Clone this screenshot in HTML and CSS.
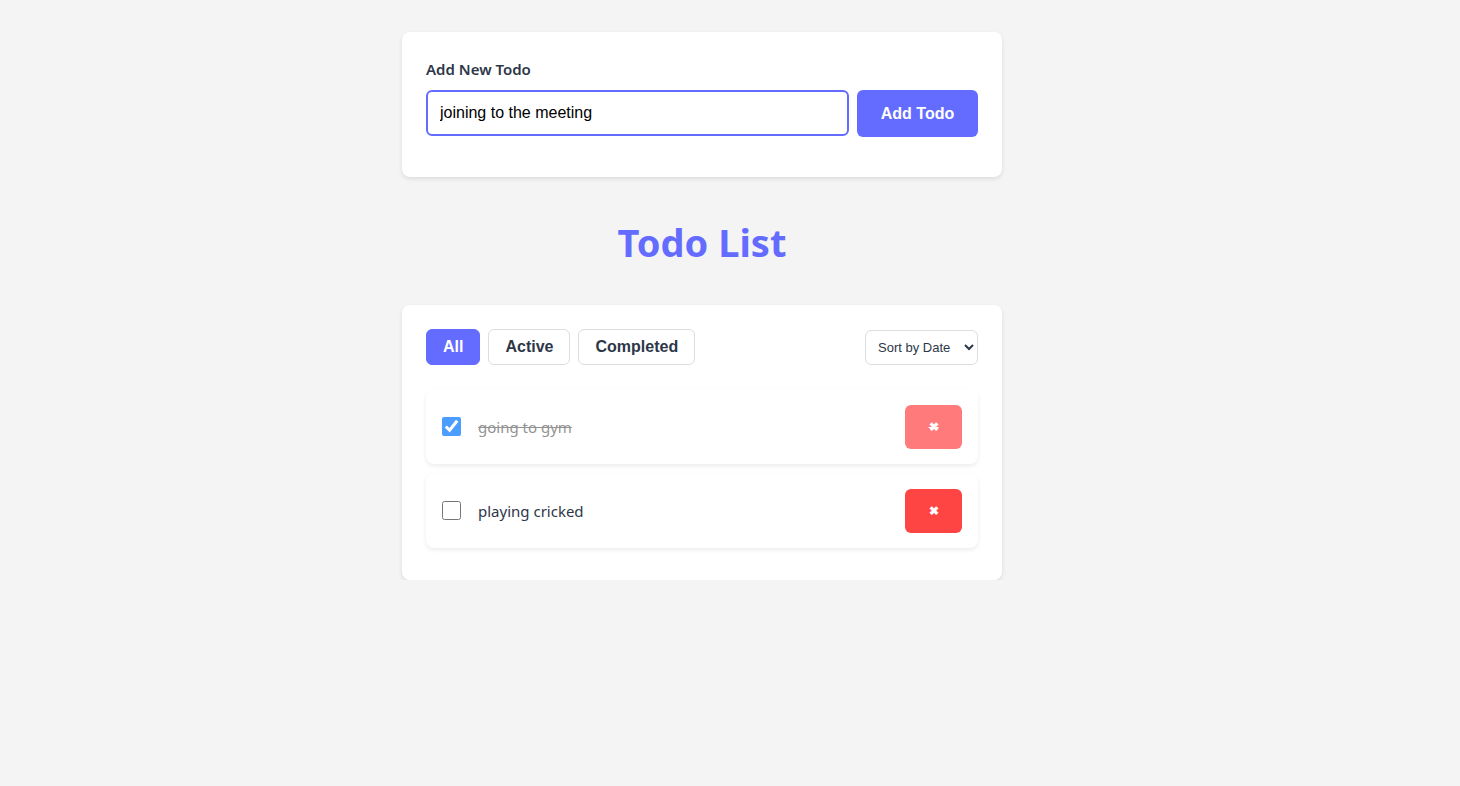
FILE: index.html
```html
<!DOCTYPE html>
<html>
<head>
<meta charset="utf-8">
<link rel="stylesheet" href="styles.css">
</head>
<body>
<div class="app">
  <form class="card add-card">
    <label class="add-label">Add New Todo</label>
    <div class="add-row">
      <input class="add-input" type="text" value="joining to the meeting">
      <button class="add-btn" type="button">Add Todo</button>
    </div>
  </form>
  <h1 class="title">Todo List</h1>
  <div class="card list-card">
    <div class="toolbar">
      <div class="filters">
        <button class="filter active-filter">All</button>
        <button class="filter">Active</button>
        <button class="filter">Completed</button>
      </div>
      <select class="sort"><option>Sort by Date</option></select>
    </div>
    <ul class="todos">
      <li class="todo done">
        <input class="check" type="checkbox" checked>
        <span class="todo-text">going to gym</span>
        <button class="del">✖</button>
      </li>
      <li class="todo">
        <input class="check" type="checkbox">
        <span class="todo-text">playing cricked</span>
        <button class="del">✖</button>
      </li>
    </ul>
  </div>
</div>
</body>
</html>
```

FILE: styles.css
```css
* { box-sizing: border-box; }
body {
  margin: 0;
  background: #f4f4f4;
  font-family: "Noto Sans", sans-serif;
}
.app {
  width: 600px;
  margin: 32px 0 0 402px;
}
.card {
  background: #fff;
  border-radius: 8px;
  box-shadow: 0 2px 4px rgba(0,0,0,0.1);
  padding: 24px;
}
.add-card { padding: 27px 24px 40px; margin: 0; }
.add-label {
  display: block;
  font-size: 15px;
  font-weight: 600;
  color: #2d3748;
  margin-bottom: 11px;
}
.add-row { display: flex; gap: 8px; }
.add-input {
  flex: 1;
  height: 46px;
  border: 2px solid #646cff;
  border-radius: 6px;
  padding: 0 12px;
  font-family: "Liberation Sans", Arial, sans-serif;
  font-size: 16px;
  color: #000;
  outline: none;
}
.add-btn {
  width: 121px;
  height: 47px;
  border: none;
  border-radius: 6px;
  background: #646cff;
  color: #fff;
  font-family: "Liberation Sans", Arial, sans-serif;
  font-weight: 700;
  font-size: 16px;
}
.title {
  margin: 39px 0 37px;
  text-align: center;
  color: #646cff;
  font-size: 38px;
  font-weight: 700;
  line-height: 52px;
}
.toolbar {
  display: flex;
  justify-content: space-between;
  align-items: center;
  margin-bottom: 24px;
}
.list-card { padding-bottom: 32px; }
.filters { display: flex; gap: 8px; }
.filter {
  height: 36px;
  padding: 0 16px;
  border: 1px solid #ddd;
  border-radius: 6px;
  background: #fff;
  color: #2d3748;
  font-family: "Liberation Sans", Arial, sans-serif;
  font-weight: 700;
  font-size: 16px;
}
.active-filter {
  background: #646cff;
  border-color: #646cff;
  color: #fff;
}
.sort {
  width: 113px;
  height: 35px;
  border: 1px solid #ddd;
  border-radius: 6px;
  background: #fff;
  color: #2d3748;
  font-family: "Liberation Sans", Arial, sans-serif;
  font-size: 13px;
  padding: 0 8px;
}
.todos {
  list-style: none;
  margin: 0;
  padding: 0;
  display: flex;
  flex-direction: column;
  gap: 9px;
}
.todo {
  display: flex;
  align-items: center;
  height: 75px;
  padding: 0 16px;
  background: #fff;
  border-radius: 8px;
  box-shadow: 0 2px 4px rgba(0,0,0,0.08);
}
.check {
  width: 19px;
  height: 19px;
  margin: 0 17px 0 0;
}
.todo-text {
  flex: 1;
  font-size: 15px;
  color: #2d3748;
}
.del {
  width: 57px;
  height: 44px;
  border: none;
  border-radius: 6px;
  background: #ff4444;
  color: #fff;
  font-size: 12px;
  font-weight: 700;
}
.done .check,
.done .todo-text,
.done .del { opacity: 0.7; }
.done .todo-text {
  color: #666;
  text-decoration: line-through;
}
.done .del { text-decoration: line-through; }
```
